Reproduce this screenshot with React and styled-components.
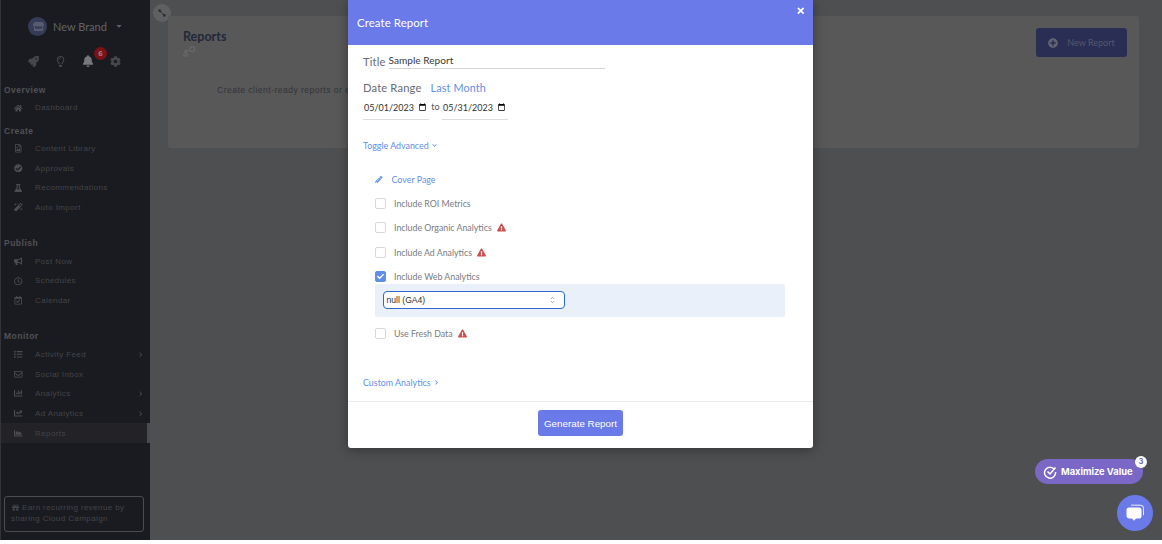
import React from "react";
import styled, { createGlobalStyle } from "styled-components";
import {
  FaRocket, FaRegLightbulb, FaBell, FaCog, FaHome, FaRegFileImage, FaCheckCircle, FaFlask, FaMagic,
  FaBullhorn, FaRegClock, FaRegCalendarCheck, FaList, FaRegEnvelope, FaChartBar, FaChartLine, FaChartArea,
  FaGift, FaPencilAlt, FaExclamationTriangle, FaPlusCircle, FaTimes, FaExpandAlt, FaStore, FaCaretDown,
  FaChevronRight, FaChevronDown, FaCheck,
} from "react-icons/fa";

const Global = createGlobalStyle`
  html, body { margin: 0; padding: 0; background: #fff; }
  body { font-family: "Lato", "Liberation Sans", sans-serif; }
  * { box-sizing: border-box; }
`;

const Page = styled.div`
  position: relative;
  width: 1162px;
  height: 540px;
  display: flex;
  overflow: hidden;
  background: #4e4f51;
`;

const Sidebar = styled.aside`
  width: 150px;
  flex: none;
  height: 540px;
  background: #1a1b20;
  border-left: 1px solid #333437;
  display: flex;
  flex-direction: column;
  font-family: "Liberation Sans", sans-serif;
  color: #5a5b5f;
`;

const Brand = styled.div`
  display: flex;
  align-items: center;
  height: 20px;
  margin: 16px 0 0 27px;
  gap: 6px;
  font-family: "Lato", sans-serif;
  font-size: 11px;
  color: #626367;
  svg:last-child { margin-left: 2px; }
`;

const Avatar = styled.div`
  width: 19px;
  height: 19px;
  border-radius: 50%;
  background: #363c58;
  color: #585c70;
  display: flex;
  align-items: center;
  justify-content: center;
  font-size: 11px;
`;

const TopIcons = styled.div`
  display: flex;
  align-items: center;
  gap: 16px;
  margin: 15px 0 0 27px;
  height: 20px;
  font-size: 11px;
  color: #46474b;
`;

const BellWrap = styled.span`
  position: relative;
  display: flex;
  color: #77787b;
  font-size: 12px;
`;

const BellBadge = styled.span`
  position: absolute;
  top: -8px;
  left: 12px;
  width: 13px;
  height: 13px;
  border-radius: 50%;
  background: #7a1218;
  color: #b08085;
  font-size: 8px;
  font-weight: 700;
  line-height: 13px;
  text-align: center;
`;

const Group = styled.div`
  margin-top: ${(p) => p.$top}px;
`;

const GroupLabel = styled.div`
  height: 16px;
  line-height: 16px;
  padding-left: 3px;
  margin-bottom: ${(p) => p.$after || 0}px;
  font-size: 8.5px;
  font-weight: 700;
  letter-spacing: 0.5px;
  color: #505155;
`;

const Item = styled.div`
  display: flex;
  align-items: center;
  height: 19.7px;
  padding-left: 13px;
  font-size: 8px;
  letter-spacing: 0.4px;
  color: #434449;
  position: relative;
  background: ${(p) => (p.$active ? "#222227" : "transparent")};
  border-right: ${(p) => (p.$active ? "3px solid #4a4b4f" : "0")};
`;

const ItemIcon = styled.span`
  width: 21px;
  flex: none;
  display: flex;
  font-size: 8.5px;
  color: #4c4d51;
`;

const ItemChevron = styled.span`
  margin-left: auto;
  margin-right: 7px;
  display: flex;
  font-size: 5.5px;
  color: #45464a;
`;

const Earn = styled.div`
  margin: auto 6px 8px 3px;
  height: 36px;
  border: 1px solid #4b4c50;
  border-radius: 3px;
  padding: 5px 6px;
  font-size: 8px;
  line-height: 11px;
  letter-spacing: 0.4px;
  color: #434449;
  svg { font-size: 7px; margin: 0 3px 0 1px; vertical-align: -0.5px; }
`;

const Main = styled.main`
  flex: 1;
  position: relative;
  padding: 16px 23px 0 18px;
`;

const ExpandBtn = styled.button`
  position: absolute;
  top: 4px;
  left: 3px;
  width: 18px;
  height: 18px;
  padding: 0;
  border: 0;
  border-radius: 50%;
  background: #5f6062;
  color: #26272a;
  display: flex;
  align-items: center;
  justify-content: center;
  font-size: 8px;
  svg { transform: rotate(90deg); }
`;

const Card = styled.section`
  position: relative;
  height: 132px;
  background: #585858;
  border-radius: 3px;
  padding: 13px 15px;
  display: flex;
  justify-content: space-between;
`;

const CardTitle = styled.h1`
  margin: 0;
  font-size: 12.5px;
  line-height: 16px;
  font-weight: 700;
  color: #22283a;
`;

const DollarMark = styled.div`
  position: relative;
  font-family: "Liberation Sans", sans-serif;
  font-size: 10px;
  line-height: 11px;
  color: #6c6c6c;
  transform: rotate(15deg);
  width: 8px;
  margin-top: 3px;
  &::after {
    content: "";
    position: absolute;
    top: -3px;
    left: 5px;
    width: 4px;
    height: 4px;
    border: 1px solid #6c6c6c;
    border-radius: 50%;
  }
`;

const CardText = styled.p`
  margin: 26px 0 0 34px;
  font-family: "Liberation Sans", sans-serif;
  font-size: 8.6px;
  letter-spacing: 0.45px;
  white-space: nowrap;
  color: #333438;
`;

const NewReport = styled.button`
  width: 91px;
  height: 29px;
  margin: -1px -3px 0 0;
  border: 0;
  border-radius: 3px;
  background: #2a2e55;
  color: #55586f;
  font-family: "Lato", sans-serif;
  font-size: 9px;
  display: flex;
  align-items: center;
  justify-content: center;
  gap: 9px;
  svg { font-size: 10px; color: #62646f; }
`;

const Modal = styled.div`
  position: absolute;
  top: 0;
  left: 348px;
  width: 465px;
  height: 448px;
  background: #fff;
  border-radius: 0 0 3px 3px;
  box-shadow: 0 2px 12px rgba(0, 0, 0, 0.35);
  display: flex;
  flex-direction: column;
`;

const ModalHeader = styled.header`
  height: 45px;
  flex: none;
  background: #6a7ae9;
  color: #fff;
  padding: 0 8px 0 9px;
  display: flex;
  justify-content: space-between;
  font-size: 11.4px;
`;

const ModalTitle = styled.span`
  line-height: 46px;
  letter-spacing: 0.1px;
`;

const CloseIcon = styled.span`
  display: flex;
  padding-top: 6px;
  font-size: 9.5px;
`;

const ModalBody = styled.div`
  flex: 1;
  padding: 7.5px 0 0 15px;
  display: flex;
  flex-direction: column;
`;

const TitleRow = styled.div`
  display: flex;
  align-items: flex-end;
  height: 16px;
`;

const FieldLabel = styled.span`
  font-size: 11.2px;
  line-height: 15px;
  color: #666b73;
  letter-spacing: 0.15px;
`;

const TitleValue = styled.div`
  width: 216px;
  margin-left: 3px;
  height: 16px;
  border-bottom: 1px solid #d5d5d5;
  font-size: 10.1px;
  line-height: 15px;
  color: #3b3b3b;
`;

const RangeRow = styled.div`
  display: flex;
  gap: 9px;
  margin-top: 10.5px;
  height: 16px;
  align-items: center;
`;

const LinkText = styled.span`
  font-size: 10.8px;
  color: #5f8fe8;
  letter-spacing: 0.15px;
`;

const DatesRow = styled.div`
  display: flex;
  align-items: flex-start;
  margin-top: 3px;
  font-size: 9px;
  color: #555;
`;

const DateInput = styled.input`
  width: 66px;
  height: 22px;
  border: 0;
  border-bottom: 1px solid #ddd;
  padding: 0 0 3px 1px;
  font-family: "Lato", sans-serif;
  font-size: 9px;
  color: #333;
  background: transparent;
  outline: none;
  &::-webkit-datetime-edit-text { padding: 0; }
  &::-webkit-datetime-edit-month-field,
  &::-webkit-datetime-edit-day-field,
  &::-webkit-datetime-edit-year-field { padding: 0; }
  &::-webkit-calendar-picker-indicator { width: 9px; height: 9px; margin: 0 2px 0 0; padding: 0; }
`;

const DateTo = styled.span`
  width: 13px;
  text-align: center;
  line-height: 18px;
`;

const Toggle = styled.div`
  margin-top: 19.5px;
  height: 12px;
  display: flex;
  align-items: center;
  gap: 3px;
  font-size: 8.9px;
  color: #5f8fe8;
  svg { font-size: 5px; }
`;

const Options = styled.div`
  margin-top: 22px;
  padding-left: 12px;
  display: flex;
  flex-direction: column;
`;

const CoverRow = styled.div`
  display: flex;
  align-items: center;
  height: 12px;
  gap: 9px;
  font-size: 8.9px;
  color: #5f8fe8;
  svg { font-size: 7.5px; }
`;

const OptionRow = styled.div`
  display: flex;
  align-items: center;
  height: 12px;
  margin-top: ${(p) => p.$top}px;
  font-size: 8.8px;
  color: #787b81;
`;

const Check = styled.span`
  width: 11px;
  height: 11px;
  flex: none;
  margin-right: 8px;
  border-radius: 2px;
  border: 1px solid ${(p) => (p.$on ? "#5f8fe8" : "#d8d8d8")};
  background: ${(p) => (p.$on ? "#5f8fe8" : "#fff")};
  color: #fff;
  display: flex;
  align-items: center;
  justify-content: center;
  font-size: 7px;
`;

const Warn = styled.span`
  display: flex;
  margin-left: 5px;
  font-size: 9px;
  color: #c9504f;
`;

const Panel = styled.div`
  margin: 1px 28px 0 0;
  height: 33px;
  background: #e9f0f9;
  border-radius: 2px;
  display: flex;
  align-items: center;
  padding-left: 8px;
`;

const FakeSelect = styled.div`
  width: 182px;
  height: 18px;
  border: 1.5px solid #2f66d0;
  border-radius: 4px;
  background: #fff;
  font-family: "Liberation Sans", sans-serif;
  font-size: 8.6px;
  color: #333;
  padding: 0 9px 0 2.5px;
  display: flex;
  align-items: center;
  justify-content: space-between;
`;

const Custom = styled.div`
  margin-top: 36.5px;
  height: 12px;
  display: flex;
  align-items: center;
  gap: 3px;
  font-size: 8.9px;
  color: #5f8fe8;
  svg { font-size: 5px; }
`;

const ModalFooter = styled.footer`
  height: 47px;
  flex: none;
  border-top: 1px solid #ececec;
  display: flex;
  justify-content: center;
  padding-top: 8px;
`;

const Generate = styled.button`
  width: 85px;
  height: 26px;
  border: 0;
  border-radius: 3px;
  background: #6a7ae9;
  color: #fff;
  font-family: "Liberation Sans", sans-serif;
  font-size: 9.8px;
  padding: 0;
`;

const Maximize = styled.div`
  position: absolute;
  left: 1035px;
  top: 459px;
  width: 108px;
  height: 25px;
  border-radius: 13px;
  background: #7b68c6;
  color: #fff;
  font-family: "Inter", "Liberation Sans", sans-serif;
  font-size: 9.3px;
  font-weight: 700;
  display: flex;
  align-items: center;
  padding-left: 8px;
  gap: 4px;
`;

const MaxBadge = styled.span`
  position: absolute;
  top: -3px;
  right: -4px;
  width: 12px;
  height: 12px;
  border-radius: 50%;
  background: #fff;
  color: #6a5ab0;
  font-size: 7px;
  font-weight: 700;
  line-height: 12px;
  text-align: center;
`;

const ChatButton = styled.div`
  position: absolute;
  left: 1117px;
  top: 495px;
  width: 36px;
  height: 36px;
  border-radius: 50%;
  background: #6a7ae9;
  display: flex;
  align-items: center;
  justify-content: center;
`;

const nav = {
  overview: [[FaHome, "Dashboard"]],
  create: [
    [FaRegFileImage, "Content Library"],
    [FaCheckCircle, "Approvals"],
    [FaFlask, "Recommendations"],
    [FaMagic, "Auto Import"],
  ],
  publish: [
    [FaBullhorn, "Post Now"],
    [FaRegClock, "Schedules"],
    [FaRegCalendarCheck, "Calendar"],
  ],
  monitor: [
    [FaList, "Activity Feed", true],
    [FaRegEnvelope, "Social Inbox"],
    [FaChartBar, "Analytics", true],
    [FaChartLine, "Ad Analytics", true],
    [FaChartArea, "Reports", false, true],
  ],
};

function NavGroup({ label, items, top, after }) {
  return (
    <Group $top={top}>
      <GroupLabel $after={after}>{label}</GroupLabel>
      {items.map(([Icon, text, chevron, active]) => (
        <Item key={text} $active={active}>
          <ItemIcon><Icon /></ItemIcon>
          {text}
          {chevron && <ItemChevron><FaChevronRight /></ItemChevron>}
        </Item>
      ))}
    </Group>
  );
}

function Option({ label, top, on, warn }) {
  return (
    <OptionRow $top={top}>
      <Check $on={on}>{on && <FaCheck />}</Check>
      {label}
      {warn && <Warn><FaExclamationTriangle /></Warn>}
    </OptionRow>
  );
}

export default function App() {
  return (
    <Page>
      <Global />
      <Sidebar>
        <Brand>
          <Avatar><FaStore /></Avatar>
          New Brand
          <FaCaretDown size={8} />
        </Brand>
        <TopIcons>
          <FaRocket />
          <FaRegLightbulb />
          <BellWrap><FaBell /><BellBadge>6</BellBadge></BellWrap>
          <FaCog />
        </TopIcons>
        <NavGroup label="Overview" items={nav.overview} top={11} />
        <NavGroup label="Create" items={nav.create} top={5} />
        <NavGroup label="Publish" items={nav.publish} top={18} />
        <NavGroup label="Monitor" items={nav.monitor} top={17} after={1} />
        <Earn><FaGift />Earn recurring revenue by sharing Cloud Campaign</Earn>
      </Sidebar>
      <Main>
        <ExpandBtn><FaExpandAlt /></ExpandBtn>
        <Card>
          <div>
            <CardTitle>Reports</CardTitle>
            <DollarMark>$</DollarMark>
            <CardText>Create client-ready reports or e</CardText>
          </div>
          <NewReport><FaPlusCircle />New Report</NewReport>
        </Card>
      </Main>
      <Modal>
        <ModalHeader>
          <ModalTitle>Create Report</ModalTitle>
          <CloseIcon><FaTimes /></CloseIcon>
        </ModalHeader>
        <ModalBody>
          <TitleRow>
            <FieldLabel>Title</FieldLabel>
            <TitleValue>Sample Report</TitleValue>
          </TitleRow>
          <RangeRow>
            <FieldLabel>Date Range</FieldLabel>
            <LinkText>Last Month</LinkText>
          </RangeRow>
          <DatesRow>
            <DateInput type="date" defaultValue="2023-05-01" />
            <DateTo>to</DateTo>
            <DateInput type="date" defaultValue="2023-05-31" />
          </DatesRow>
          <Toggle>Toggle Advanced <FaChevronDown /></Toggle>
          <Options>
            <CoverRow><FaPencilAlt />Cover Page</CoverRow>
            <Option label="Include ROI Metrics" top={12} />
            <Option label="Include Organic Analytics" top={12.4} warn />
            <Option label="Include Ad Analytics" top={12.4} warn />
            <Option label="Include Web Analytics" top={12.4} on />
            <Panel>
              <FakeSelect>
                null (GA4)
                <svg width="5" height="8" viewBox="0 0 6 9" fill="none" stroke="#8a8a8a" strokeWidth="1">
                  <path d="M1 3.2 3 1.2 5 3.2M1 5.8 3 7.8 5 5.8" />
                </svg>
              </FakeSelect>
            </Panel>
            <Option label="Use Fresh Data" top={11} warn />
          </Options>
          <Custom>Custom Analytics <FaChevronRight /></Custom>
        </ModalBody>
        <ModalFooter>
          <Generate>Generate Report</Generate>
        </ModalFooter>
      </Modal>
      <Maximize>
        <svg width="14" height="14" viewBox="0 0 14 14" fill="none" stroke="#fff" strokeWidth="1.5">
          <path d="M11.5 4.5A5.5 5.5 0 1 0 12.5 7" />
          <path d="M4.5 6.5 7 9 12.5 2.5" />
        </svg>
        Maximize Value
        <MaxBadge>3</MaxBadge>
      </Maximize>
      <ChatButton>
        <svg width="20" height="18" viewBox="0 0 20 18">
          <path d="M6 1.2h9.5a3 3 0 0 1 3 3v7" fill="none" stroke="#fff" strokeWidth="0.9" />
          <path d="M4 3.5h10a2.5 2.5 0 0 1 2.5 2.5v6a2.5 2.5 0 0 1-2.5 2.5h-3l-2 2.3-2-2.3H4A2.5 2.5 0 0 1 1.5 12V6A2.5 2.5 0 0 1 4 3.5Z" fill="#fff" />
        </svg>
      </ChatButton>
    </Page>
  );
}
